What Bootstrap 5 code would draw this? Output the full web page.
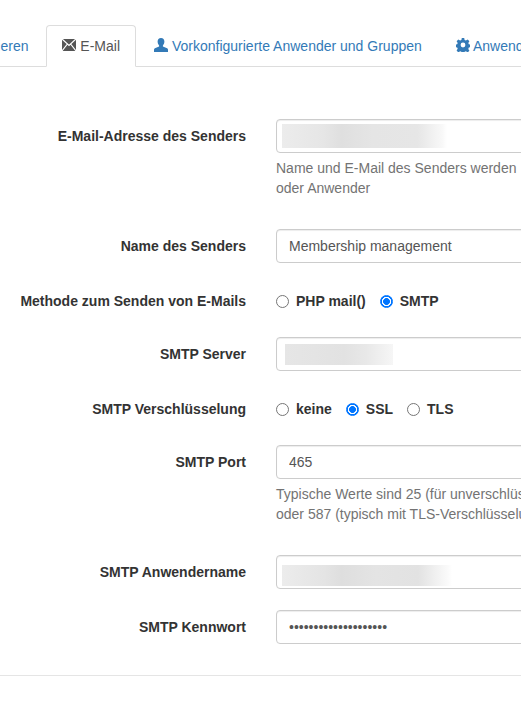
<!DOCTYPE html>
<html lang="de">
<head>
<meta charset="utf-8">
<title>E-Mail</title>
<link href="https://cdn.jsdelivr.net/npm/bootstrap@5.3.0/dist/css/bootstrap.min.css" rel="stylesheet">
<style>
html,body{overflow:hidden;height:100%;}
body{font-family:"Liberation Sans",Arial,sans-serif;font-size:14px;line-height:20px;color:#333;background:#fff;width:521px;}
.tab-strip{margin-top:25px;padding-left:0;border-bottom:1px solid #ddd;flex-wrap:nowrap;white-space:nowrap;height:42px;width:900px;margin-left:-63px;}
.tab-strip .nav-link{color:#337ab7;padding:10px 15px;height:42px;line-height:20px;border:1px solid transparent;border-radius:4px 4px 0 0;margin-right:2px;}
.tab-strip .nav-link.active{color:#555;background:#fff;border-color:#ddd #ddd #fff;}
.tab-glyph{display:inline-block;vertical-align:-1px;width:14px;height:14px;fill:currentColor;}
.form-area{padding-top:52px;width:800px;}
.field-row{display:flex;margin-bottom:21px;}
.field-label{width:246px;flex:none;text-align:right;font-weight:700;padding-top:7px;margin:0;}
.field-body{margin-left:30px;flex:1;}
.field-input{position:relative;height:34px;font-size:14px;line-height:20px;color:#555;padding:6px 12px;border:1px solid #ccc;border-radius:4px;box-shadow:inset 0 1px 1px rgba(0,0,0,.075);width:524px;}
.field-input:focus{border-color:#ccc;}
.help-line{color:#737373;margin-top:5px;margin-bottom:10px;width:500px;}
.radio-row{height:32px;margin-bottom:21px;align-items:center;padding-top:2px;}
.radio-row .field-label{padding-top:0;}
.choice{font-weight:700;display:inline-flex;align-items:center;margin:0;}
.choice-next{margin-left:14px;}
.choice .form-check-input{width:13px;height:13px;margin:0 7px 0 0;border-color:#767676;flex:none;}
.choice .form-check-input:checked{border-color:#0075ff;background:radial-gradient(circle at center,#0075ff 0,#0075ff 3.1px,#fff 3.7px,#fff 4.4px,#0075ff 5px);}
.wrap-box{position:relative;}
.blur-patch{position:absolute;pointer-events:none;}
.blur-a{left:6px;top:5px;width:165px;height:24px;background:linear-gradient(90deg,#ececec 0,#e6e6e6 25%,#dfdfdf 36%,#e5e5e5 55%,#e6e6e6 82%,#f8f8f8 97%,#fff 100%);}
.blur-b{left:9px;top:7px;width:108px;height:21px;background:linear-gradient(90deg,#e6e6e6 0,#e2e2e2 55%,#e8e8e8 75%,#f6f6f6 100%);}
.blur-c{left:6px;top:10px;width:170px;height:21px;background:linear-gradient(90deg,#ececec 0,#e4e4e4 25%,#dedede 35%,#e4e4e4 55%,#e2e2e2 80%,#fbfbfb 98%,#fff 100%);}
.end-rule{width:100%;margin:31px 0 0;border:0;border-top:1px solid #e5e5e5;opacity:1;}
</style>
</head>
<body>
<ul class="nav nav-tabs tab-strip">
  <li class="nav-item"><a class="nav-link" href="#">Registrieren</a></li>
  <li class="nav-item"><a class="nav-link active" href="#"><svg class="tab-glyph" viewBox="0 0 14 14"><path d="M0 1h14v12H0z"/><path d="M0 1l7 6.500L14 1M0 13l5.400-7M14 13L8.600 6" fill="none" stroke="#fff" stroke-width="1.200"/></svg> E-Mail</a></li>
  <li class="nav-item"><a class="nav-link" href="#"><svg class="tab-glyph" viewBox="0 0 14 14"><path d="M7 0c2.200 0 3.400 1.600 3.400 3.600 0 1.500-.6 3-1.500 3.800v1.100l3.600 1.600c1 .4 1.500 1 1.500 1.900v1.900H0v-1.900c0-.9.500-1.500 1.500-1.900l3.600-1.600V7.400C4.200 6.600 3.600 5.100 3.600 3.600 3.600 1.600 4.800 0 7 0z"/></svg> Vorkonfigurierte Anwender und Gruppen</a></li>
  <li class="nav-item"><a class="nav-link" href="#"><svg class="tab-glyph" viewBox="0 0 14 14"><path fill-rule="evenodd" d="M5.800 0h2.400l.4 2 1.300.6L11.700 1.500l1.700 1.700-1.100 1.800.5 1.300 2 .5v2.400l-2 .4-.5 1.300 1.100 1.800-1.700 1.700-1.800-1.100-1.300.5-.4 2H5.800l-.4-2-1.300-.5-1.800 1.100L.6 12.600l1.100-1.800-.5-1.300-2-.4V6.700l2-.4.500-1.300L.6 3.200 2.300 1.500l1.800 1.100 1.300-.6zM7 4.600A2.400 2.400 0 1 0 7 9.400 2.400 2.400 0 1 0 7 4.600z"/></svg> Anwendereinstellungen</a></li>
</ul>
<form class="form-area">
  <div class="field-row">
    <label class="field-label" for="f1">E-Mail-Adresse des Senders</label>
    <div class="field-body">
      <div class="wrap-box"><input class="form-control field-input" id="f1" type="text"><div class="blur-patch blur-a"></div></div>
      <p class="help-line">Name und E-Mail des Senders werden<br>oder Anwender</p>
    </div>
  </div>
  <div class="field-row">
    <label class="field-label" for="f2">Name des Senders</label>
    <div class="field-body"><input class="form-control field-input" id="f2" type="text" value="Membership management"></div>
  </div>
  <div class="field-row radio-row">
    <div class="field-label">Methode zum Senden von E-Mails</div>
    <div class="field-body d-flex">
      <label class="choice"><input class="form-check-input" type="radio" name="m">PHP mail()</label>
      <label class="choice choice-next"><input class="form-check-input" type="radio" name="m" checked>SMTP</label>
    </div>
  </div>
  <div class="field-row">
    <label class="field-label" for="f3">SMTP Server</label>
    <div class="field-body"><div class="wrap-box"><input class="form-control field-input" id="f3" type="text"><div class="blur-patch blur-b"></div></div></div>
  </div>
  <div class="field-row radio-row">
    <div class="field-label">SMTP Verschlüsselung</div>
    <div class="field-body d-flex">
      <label class="choice"><input class="form-check-input" type="radio" name="s">keine</label>
      <label class="choice choice-next"><input class="form-check-input" type="radio" name="s" checked>SSL</label>
      <label class="choice choice-next"><input class="form-check-input" type="radio" name="s">TLS</label>
    </div>
  </div>
  <div class="field-row">
    <label class="field-label" for="f4">SMTP Port</label>
    <div class="field-body">
      <input class="form-control field-input" id="f4" type="text" value="465">
      <p class="help-line">Typische Werte sind 25 (für unverschlüsselte Verbindungen), 465 (SSL)<br>oder 587 (typisch mit TLS-Verschlüsselung)</p>
    </div>
  </div>
  <div class="field-row">
    <label class="field-label" for="f5">SMTP Anwendername</label>
    <div class="field-body"><div class="wrap-box"><input class="form-control field-input" id="f5" type="text"><div class="blur-patch blur-c"></div></div></div>
  </div>
  <div class="field-row">
    <label class="field-label" for="f6">SMTP Kennwort</label>
    <div class="field-body"><input class="form-control field-input" id="f6" type="password" value="12345678901234567890"></div>
  </div>
</form>
<hr class="end-rule">
</body>
</html>
